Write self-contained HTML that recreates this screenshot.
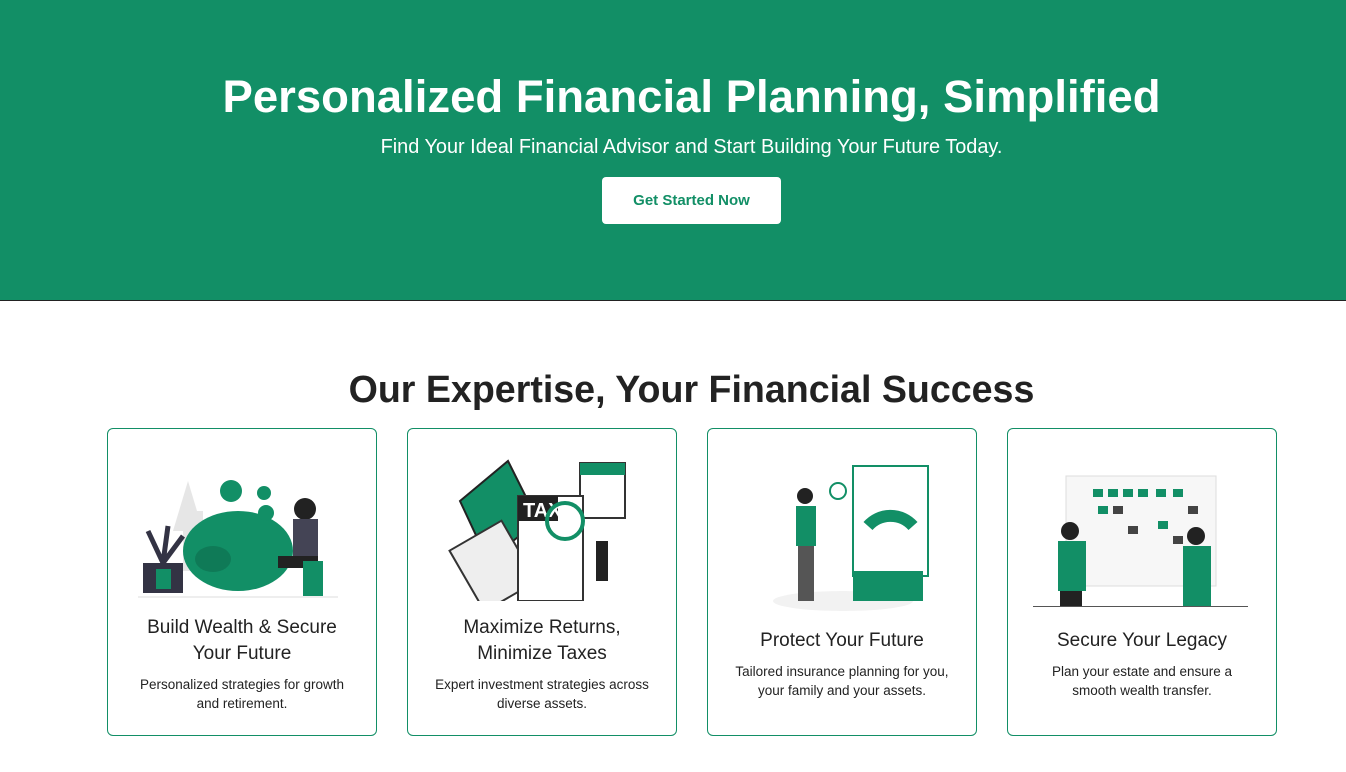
<!DOCTYPE html>
<html><head><meta charset="utf-8"><style>
body{margin:0;font-family:"Liberation Sans",sans-serif;background:#fff;width:1346px;height:772px;overflow:hidden}
.hero{height:300px;background:#128f66;border-bottom:1px solid #222;color:#fff;text-align:center;position:relative}
.c{position:absolute;left:0;width:1383px;text-align:center}
.hero h1{margin:0;top:71px;font-size:45.5px;font-weight:bold}
.hero p{margin:0;top:136px;font-size:19.9px}
.btn{position:absolute;left:602px;top:177px;width:179px;height:47px;background:#fff;border-radius:4px;color:#128f66;font-weight:bold;font-size:15px;line-height:47px}
h2{top:368px;margin:0;font-size:37.6px;color:#222;font-weight:bold}
.card{position:absolute;top:428px;width:268px;height:306px;border:1px solid #128f66;border-radius:6px;text-align:center;color:#222}
.card svg{position:absolute;left:20px;top:22px}
.t{position:absolute;left:0;right:0;font-size:19px;line-height:26px}
.d{position:absolute;left:24px;right:24px;font-size:13.5px;line-height:19px}
</style></head><body>
<div class="hero"><h1 class="c">Personalized Financial Planning, Simplified</h1><p class="c">Find Your Ideal Financial Advisor and Start Building Your Future Today.</p><div class="btn">Get Started Now</div></div>
<h2 class="c">Our Expertise, Your Financial Success</h2>

<div class="card" style="left:107px">
<svg width="228" height="150"><polygon points="45,80 60,30 75,80" fill="#e6e6e6"/><rect x="55" y="60" width="20" height="60" fill="#e6e6e6"/>
<ellipse cx="110" cy="100" rx="55" ry="40" fill="#128f66"/><ellipse cx="85" cy="108" rx="18" ry="13" fill="#0f7a57"/>
<circle cx="103" cy="40" r="11" fill="#128f66"/><circle cx="136" cy="42" r="7" fill="#128f66"/><circle cx="138" cy="62" r="8" fill="#128f66"/>
<rect x="15" y="112" width="40" height="30" fill="#334"/><path d="M35 112 L20 80 M35 112 L40 75 M35 112 L55 85" stroke="#334" stroke-width="5"/><rect x="28" y="118" width="15" height="20" fill="#128f66"/>
<circle cx="177" cy="58" r="11" fill="#222"/><rect x="165" y="68" width="25" height="40" fill="#445"/><rect x="150" y="105" width="40" height="12" fill="#222"/><rect x="175" y="110" width="20" height="35" fill="#128f66"/><rect x="10" y="145" width="200" height="2" fill="#eee"/></svg>
<div class="t" style="top:186px">Build Wealth &amp; Secure<br>Your Future</div>
<div class="d" style="top:246px">Personalized strategies for growth and retirement.</div></div>

<div class="card" style="left:407px">
<svg width="228" height="150"><polygon points="32,50 80,10 110,70 60,110" fill="#128f66" stroke="#222" stroke-width="2"/>
<rect x="152" y="12" width="45" height="55" fill="#fff" stroke="#333" stroke-width="2"/><rect x="152" y="12" width="45" height="12" fill="#128f66"/>
<rect x="35" y="80" width="60" height="70" fill="#eee" stroke="#333" stroke-width="2" transform="rotate(-30 65 115)"/>
<rect x="90" y="45" width="65" height="105" fill="#fff" stroke="#333" stroke-width="2"/><rect x="90" y="45" width="40" height="25" fill="#222"/><text x="95" y="66" fill="#fff" font-size="20" font-weight="bold" font-family="Liberation Sans">TAX</text>
<circle cx="137" cy="70" r="18" fill="none" stroke="#128f66" stroke-width="4"/><rect x="168" y="90" width="12" height="40" fill="#222"/></svg>
<div class="t" style="top:186px">Maximize Returns,<br>Minimize Taxes</div>
<div class="d" style="top:246px">Expert investment strategies across diverse assets.</div></div>

<div class="card" style="left:707px">
<svg width="228" height="165"><ellipse cx="115" cy="150" rx="70" ry="10" fill="#f2f2f2"/><rect x="125" y="15" width="75" height="110" fill="#fff" stroke="#128f66" stroke-width="2"/>
<path d="M140 75 A30 30 0 0 1 185 75" stroke="#128f66" stroke-width="12" fill="none"/><rect x="125" y="120" width="70" height="30" fill="#128f66"/>
<circle cx="77" cy="45" r="8" fill="#222"/><rect x="68" y="55" width="20" height="40" fill="#128f66"/><rect x="70" y="95" width="16" height="55" fill="#555"/><circle cx="110" cy="40" r="8" fill="none" stroke="#128f66" stroke-width="2"/></svg>
<div class="t" style="top:199px">Protect Your Future</div>
<div class="d" style="top:233px">Tailored insurance planning for you, your family and your assets.</div></div>

<div class="card" style="left:1007px">
<svg width="228" height="165"><rect x="38" y="25" width="150" height="110" fill="#f7f7f7" stroke="#ddd"/>
<g fill="#128f66"><rect x="65" y="38" width="10" height="8"/><rect x="80" y="38" width="10" height="8"/><rect x="95" y="38" width="10" height="8"/><rect x="110" y="38" width="10" height="8"/><rect x="128" y="38" width="10" height="8"/><rect x="145" y="38" width="10" height="8"/><rect x="70" y="55" width="10" height="8"/><rect x="130" y="70" width="10" height="8"/></g>
<g fill="#444"><rect x="85" y="55" width="10" height="8"/><rect x="100" y="75" width="10" height="8"/><rect x="160" y="55" width="10" height="8"/><rect x="145" y="85" width="10" height="8"/></g>
<circle cx="42" cy="80" r="9" fill="#222"/><rect x="30" y="90" width="28" height="50" fill="#128f66"/><rect x="32" y="140" width="22" height="15" fill="#222"/>
<circle cx="168" cy="85" r="9" fill="#222"/><rect x="155" y="95" width="28" height="60" fill="#128f66"/><rect x="5" y="155" width="215" height="1" fill="#555"/></svg>
<div class="t" style="top:199px">Secure Your Legacy</div>
<div class="d" style="top:233px;left:40px;right:40px">Plan your estate and ensure a smooth wealth transfer.</div></div>
</body></html>
